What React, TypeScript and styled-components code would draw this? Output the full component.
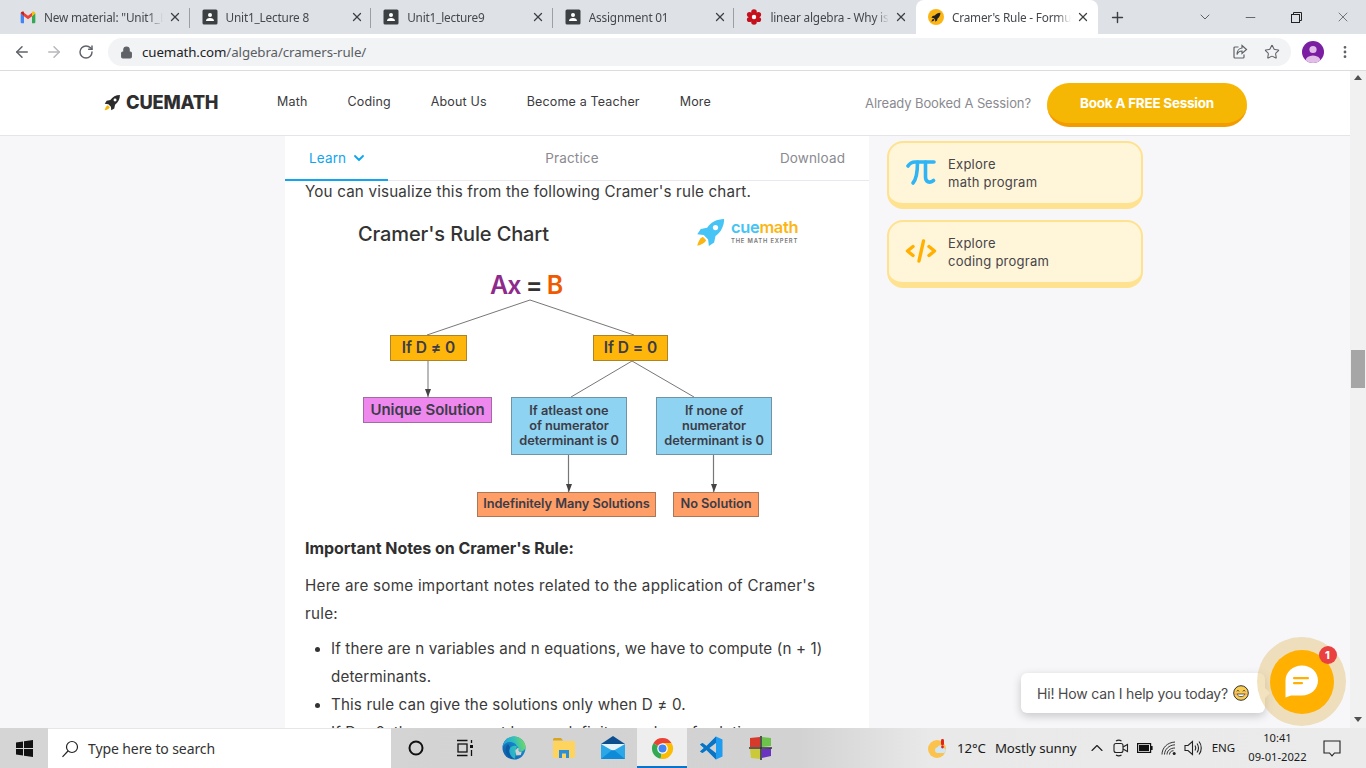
import React from "react";
import styled, { createGlobalStyle } from "styled-components";
import { ArrowLeft, ArrowRight, RotateCw, Star, MoreVertical, X, Plus, ChevronDown, Minus, Lock, ChevronUp } from "lucide-react";

const Global = createGlobalStyle`
  html, body { margin: 0; padding: 0; overflow: hidden; background: #fff; }
  * { box-sizing: border-box; }
`;

const body = `Inter, "Liberation Sans", sans-serif`;
const ui = `"Noto Sans", "Open Sans", sans-serif`;

const Shell = styled.div`
  position: relative; width: 1366px; height: 768px; display: flex; flex-direction: column; overflow: hidden;
  font-family: ${body}; color: #333;
`;

/* ---------- browser tabs ---------- */
const TabStrip = styled.div`
  height: 34px; flex: none; display: flex; background: #dee1e6; padding-left: 8px; font-family: ${ui};
`;
const Tab = styled.div<{ $active?: boolean; $sep?: boolean }>`
  position: relative; width: 181.6px; height: 34px; margin-top: 0; display: flex; align-items: center; padding-left: 12px; flex: none;
  background: ${(p) => (p.$active ? "#fff" : "transparent")};
  border-radius: ${(p) => (p.$active ? "8px 8px 0 0" : "0")};
  &::after {
    content: ""; position: absolute; right: 0; top: 8px; height: 20px; width: 1px;
    background: ${(p) => (p.$sep ? "#9aa0a6" : "transparent")};
  }
`;
const TabIcon = styled.span`
  width: 16px; height: 16px; flex: none; display: flex; margin-right: 8px;
`;
const TabTitle = styled.span`
  width: 119px; flex: none; overflow: hidden; white-space: nowrap; font-size: 11.8px; letter-spacing: -0.2px; color: #45494e;
  -webkit-mask-image: linear-gradient(to right, #000 88%, transparent 100%);
  mask-image: linear-gradient(to right, #000 88%, transparent 100%);
`;
const TabClose = styled.span`
  margin-left: 5px; display: flex; color: #3c4043;
`;
const StripButton = styled.span<{ $w: number; $left?: number }>`
  width: ${(p) => p.$w}px; height: 34px; flex: none; display: flex; align-items: center; justify-content: center; color: #3c4043;
  padding-left: ${(p) => p.$left ?? 0}px;
`;

/* ---------- toolbar ---------- */
const Toolbar = styled.div`
  height: 37px; flex: none; display: flex; align-items: flex-start; background: #fff; border-bottom: 1px solid #dadce0; padding: 4px 0 0 6px;
`;
const NavButton = styled.span<{ $off?: boolean }>`
  width: 32px; height: 28px; flex: none; display: flex; align-items: center; justify-content: center;
  color: ${(p) => (p.$off ? "#b6b8bb" : "#5f6368")};
`;
const MenuButton = styled(NavButton)`
  margin-left: 5px;
`;
const Omnibox = styled.div`
  width: 1183px; height: 28px; margin-left: 6px; flex: none; display: flex; align-items: center; background: #f1f3f4; border-radius: 14px; padding: 0 3px 0 12px;
  color: #5f6368;
`;
const Url = styled.span`
  margin-left: 9px; font-family: ${ui}; font-size: 13.3px; letter-spacing: -0.1px; color: #5a5e63; flex: 1;
  b { font-weight: 400; color: #202124; }
`;
const OmniIcon = styled.span`
  width: 32px; display: flex; justify-content: center; color: #5f6368;
`;
const Avatar = styled.span`
  margin-left: 11px; width: 22px; height: 22px; margin-top: 3px; flex: none; display: flex;
`;

/* ---------- viewport ---------- */
const Viewport = styled.div`
  flex: 1; min-height: 0; display: flex;
`;
const Page = styled.div`
  flex: 1; min-width: 0; display: flex; flex-direction: column; background: #f7f7fa;
`;
const Header = styled.header`
  height: 65px; flex: none; display: flex; align-items: center; background: #fff; border-bottom: 1px solid #e4e4ea; padding: 0 103px 0 104px;
`;
const Brand = styled.div`
  display: flex; align-items: center; gap: 5px; width: 115px; margin-bottom: 2px;
  font-weight: 800; font-size: 18.3px; letter-spacing: -0.2px; color: #2f2f2f;
`;
const Nav = styled.nav`
  display: flex; gap: 40px; margin-left: 58px; margin-bottom: 4px;
`;
const NavLink = styled.span`
  font-size: 12.5px; letter-spacing: 0.16px; color: #3b3b40;
`;
const HeaderRight = styled.div`
  margin-left: auto; display: flex; align-items: center; gap: 16px;
`;
const Already = styled.span`
  font-size: 13px; color: #8a8a90; letter-spacing: -0.1px;
`;
const BookButton = styled.span`
  width: 200px; height: 44px; margin-top: 4px; display: flex; align-items: center; justify-content: center;
  background: #f6b704; border-bottom: 4px solid #f39c00; border-radius: 22px;
  color: #fff; font-weight: 700; font-size: 13.5px; letter-spacing: -0.25px;
`;
const Content = styled.div`
  flex: 1; min-height: 0; display: flex; overflow: hidden;
`;
const Column = styled.main`
  width: 584px; margin-left: 285px; flex: none; background: #fff; overflow: hidden;
`;
const TabsRow = styled.div`
  height: 45px; display: grid; grid-template-columns: 103px 368px 113px; border-bottom: 1px solid #e8e8ee;
`;
const PageTab = styled.div<{ $active?: boolean; $align: string }>`
  display: flex; align-items: center; gap: 5px; justify-content: ${(p) => p.$align};
  padding: 0 0 ${(p) => (p.$active ? 0 : 2)}px ${(p) => (p.$active ? 24 : 0)}px;
  font-size: 13.5px; letter-spacing: 0.15px; color: ${(p) => (p.$active ? "#10a5ee" : "#8a8a90")};
  ${(p) => (p.$active ? "border-bottom: 2px solid #10a5ee; height: 45px;" : "")}
`;
const Article = styled.article`
  padding: 0 24px 0 20px;
`;
const Para = styled.p<{ $top?: number }>`
  margin: ${(p) => p.$top ?? 0}px 0 0; font-size: 15.2px; line-height: 28px; color: #3a3a3a; letter-spacing: 0.17px;
`;
const FirstPara = styled(Para)`
  line-height: 20px; margin-top: 0; padding-top: 1px;
`;
const NotesIntro = styled(Para)`
  letter-spacing: 0.25px;
`;
const Heading = styled.h4`
  margin: 4px 0 0; font-size: 16px; line-height: 28px; font-weight: 700; color: #2f2f2f; letter-spacing: -0.04px;
`;
const Bullets = styled.ul`
  margin: 7px 0 0; padding: 0 0 0 26px; list-style: none;
`;
const Bullet = styled.li`
  position: relative; font-size: 15.2px; line-height: 28px; color: #3a3a3a; white-space: nowrap; letter-spacing: 0.13px;
  &::before { content: ""; position: absolute; left: -16px; top: 12px; width: 5px; height: 5px; border-radius: 50%; background: #333; }
`;

/* ---------- chart ---------- */
const Chart = styled.div`
  position: relative; width: 584px; height: 325px; margin: 3px 0 0 -20px;
`;
const ChartLines = styled.svg`
  position: absolute; left: 0; top: 0;
`;
const ChartTitle = styled.div`
  position: absolute; left: 73px; top: 16px; font-size: 20px; font-weight: 500; line-height: 26px; color: #333; letter-spacing: -0.12px;
`;
const Equation = styled.div`
  position: absolute; left: 205px; top: 64px; font-size: 25px; line-height: 32px; font-weight: 600; white-space: nowrap; color: #333; letter-spacing: -1px;
`;
const Ax = styled.span` color: #8e2a8b; `;
const Bee = styled.span` color: #ef5a00; `;
const Node = styled.div<{ $x: number; $y: number; $w: number; $h: number; $bg: string; $size: number }>`
  position: absolute; left: ${(p) => p.$x}px; top: ${(p) => p.$y}px; width: ${(p) => p.$w}px; height: ${(p) => p.$h}px;
  display: flex; align-items: center; justify-content: center; text-align: center; white-space: nowrap; padding-bottom: 2px;
  background: ${(p) => p.$bg}; border: 1px solid rgba(70, 70, 70, 0.45);
  font-size: ${(p) => p.$size}px; font-weight: 600; line-height: 15px; color: #3c3c48; letter-spacing: -0.05px;
`;
const ChartLogo = styled.div`
  position: absolute; left: 411px; top: 12px; display: flex; gap: 5px; align-items: center;
`;
const ChartBrand = styled.div`
  display: flex; flex-direction: column; align-items: flex-start;
`;
const BrandName = styled.div`
  font-family: ${body}; font-size: 16.4px; line-height: 17px; font-weight: 600; letter-spacing: -0.3px; color: #45c4f5;
  span { color: #fcb614; }
`;
const BrandSub = styled.div`
  font-size: 5.8px; line-height: 8px; font-weight: 600; color: #777; letter-spacing: 0.85px; margin-top: 1px; white-space: nowrap;
`;

/* ---------- side cards ---------- */
const Side = styled.aside`
  width: 256px; margin-left: 18px; flex: none; padding-top: 5px; display: flex; flex-direction: column; gap: 11px;
`;
const Card = styled.div`
  height: 68px; display: flex; align-items: flex-start; padding: 12px 0 0 16px; gap: 11px;
  background: #fff5d8; border: 2px solid #ffe28f; border-bottom-width: 6px; border-radius: 16px;
`;
const CardIcon = styled.span`
  width: 32px; height: 32px; flex: none; display: flex; align-items: center; justify-content: center; margin: 1px 0 0 0;
`;
const CardText = styled.div`
  font-size: 13px; line-height: 18px; color: #45454a; letter-spacing: 0.25px;
`;

/* ---------- scrollbar ---------- */
const Scrollbar = styled.div`
  width: 16px; flex: none; background: #f1f1f1; display: flex; flex-direction: column; align-items: center; position: relative;
`;
const ScrollUp = styled.span`
  margin-top: 4px; width: 0; height: 0; border: 4px solid transparent; border-top: 0; border-bottom: 5px solid #505050;
`;
const Thumb = styled.span`
  margin-top: 270px; width: 14px; height: 38px; background: #a6a6a6;
`;
const ScrollDown = styled.span`
  margin-top: auto; margin-bottom: 6px; width: 0; height: 0; border: 4px solid transparent; border-bottom: 0; border-top: 5px solid #505050;
`;

/* ---------- chat ---------- */
const ChatHalo = styled.div`
  position: absolute; left: 1257px; top: 637px; width: 89px; height: 89px; border-radius: 50%; background: rgba(226, 190, 110, 0.45);
  display: flex; align-items: center; justify-content: center;
`;
const ChatButton = styled.div`
  width: 64px; height: 64px; border-radius: 50%; background: #ffb000; display: flex; align-items: center; justify-content: center; position: relative;
`;
const ChatBadge = styled.span`
  position: absolute; left: 49px; top: -4px; width: 18px; height: 18px; border-radius: 50%; background: #ea4040; color: #fff;
  font-size: 11px; font-weight: 800; display: flex; align-items: center; justify-content: center;
`;
const ChatBubble = styled.div`
  position: absolute; left: 1021px; top: 673px; width: 244px; height: 40px; background: #fff; border-radius: 6px;
  box-shadow: 0 3px 10px rgba(0, 0, 0, 0.2); display: flex; align-items: center; gap: 5px; padding-left: 16px;
  font-size: 14px; color: #4a4a4a; letter-spacing: -0.18px; white-space: nowrap;
  &::after { content: ""; position: absolute; right: -5px; top: 15px; width: 0; height: 0; border: 5px solid transparent; border-right: 0; border-left: 5px solid #fff; }
`;

/* ---------- taskbar ---------- */
const Taskbar = styled.footer`
  height: 40px; flex: none; display: flex; align-items: stretch; font-family: ${ui}; color: #1b1b1b;
  background: linear-gradient(to right, #d5d5d5 0, #d2d2d2 800px, #e9e9e9 930px, #ebebeb 100%);
`;
const StartCell = styled.span`
  width: 48px; flex: none; display: flex; align-items: center; justify-content: center;
`;
const SearchBox = styled.div`
  width: 343px; flex: none; background: #fff; display: flex; align-items: center; padding-left: 13px; gap: 9px; border-top: 1px solid #e6e6e6;
  font-size: 14px; color: #333; letter-spacing: -0.1px;
`;
const TaskCell = styled.span<{ $active?: boolean }>`
  width: 49.3px; flex: none; display: flex; align-items: center; justify-content: center; padding-top: ${(p) => (p.$active ? 2 : 0)}px;
  background: ${(p) => (p.$active ? "#eeeeee" : "transparent")};
  border-bottom: ${(p) => (p.$active ? "2px solid #0a74cc" : "0")};
`;
const Weather = styled.div`
  margin-left: 142.6px; display: flex; align-items: center; font-size: 13.3px; gap: 9px; white-space: nowrap; letter-spacing: -0.1px;
`;
const Tray = styled.div`
  display: flex; align-items: center; margin-left: 9px;
`;
const TrayCell = styled.span`
  width: 24px; height: 40px; flex: none; display: flex; align-items: center; justify-content: center; color: #222;
`;
const Lang = styled.span`
  width: 36px; text-align: center; font-size: 11.5px; flex: none; padding-bottom: 2px;
`;
const Clock = styled.div`
  width: 72px; flex: none; text-align: center; font-size: 11.2px; line-height: 19px; padding-bottom: 2px; align-self: center;
`;
const Notify = styled.span`
  width: 38px; flex: none; display: flex; align-items: center; justify-content: center;
`;

/* ---------- drawings ---------- */
const Rocket = ({ size, body: b, flame, win }: { size: number; body: string; flame: string; win: string }) => (
  <svg width={size} height={size} viewBox="0 0 24 24">
    <path d="M22.5 1.5c-5.8.1-10.5 2.6-13.6 7L3.8 9.6 1 13.8l5.2.6 3.5 3.5.6 5.2 4.2-2.8 1.1-5.1c4.4-3.1 6.8-7.9 6.9-13.7z" fill={b} />
    <circle cx="15.6" cy="8.4" r="2.1" fill={win} />
    <path d="M5.4 15.8C3 17 1.6 20 1 23c3-.6 6-2 7.2-4.4z" fill={flame} />
  </svg>
);
const Gmail = () => (
  <svg width="16" height="16" viewBox="0 0 24 24">
    <path d="M1 6.5V20a1.5 1.5 0 0 0 1.500 1.500H6V11z" fill="#4285f4" />
    <path d="M23 6.500V20a1.500 1.500 0 0 1-1.500 1.500H18V11z" fill="#34a853" />
    <path d="M6 11v-5.500L12 10l6-4.500V11l-6 4.500z" fill="#ea4335" />
    <path d="M1 6.500C1 4 4 2.800 5.800 4.200L6 5.500V11z" fill="#c5221f" />
    <path d="M23 6.500C23 4 20 2.800 18.200 4.200L18 5.500V11z" fill="#fbbc04" />
  </svg>
);
const Classroom = () => (
  <svg width="16" height="16" viewBox="0 0 16 16">
    <rect x="0.5" y="0.5" width="15" height="15" rx="1.500" fill="#3c4043" />
    <circle cx="8" cy="6" r="2" fill="#fff" />
    <path d="M4 12c0-2 1.500-3 4-3s4 1 4 3z" fill="#fff" />
  </svg>
);
const MathSE = () => (
  <svg width="16" height="16" viewBox="0 0 16 16">
    <g fill="#c4111b">
      <circle cx="8" cy="3" r="2.800" /><circle cx="8" cy="13" r="2.800" />
      <circle cx="3.500" cy="5.500" r="2.600" /><circle cx="12.500" cy="5.500" r="2.600" />
      <circle cx="3.500" cy="10.500" r="2.600" /><circle cx="12.500" cy="10.500" r="2.600" />
      <circle cx="8" cy="8" r="5" />
    </g>
    <circle cx="8" cy="8" r="2.200" fill="#fff" />
  </svg>
);
const CueFavicon = () => (
  <svg width="16" height="16" viewBox="0 0 16 16">
    <circle cx="8" cy="8" r="8" fill="#fbb615" />
    <g transform="translate(3 3) scale(0.42)">
      <path d="M22.500 1.500c-5.800.1-10.500 2.600-13.600 7L3.800 9.600 1 13.800l5.200.6 3.500 3.500.6 5.200 4.200-2.800 1.100-5.100c4.400-3.100 6.800-7.900 6.900-13.700z" fill="#222" />
      <path d="M5.400 15.800C3 17 1.600 20 1 23c3-.6 6-2 7.200-4.400z" fill="#222" />
    </g>
  </svg>
);
const ShareIcon = () => (
  <svg width="16" height="16" viewBox="0 0 16 16" fill="none" stroke="#5f6368" strokeWidth="1.200">
    <path d="M6.500 3H3a1 1 0 0 0-1 1v9a1 1 0 0 0 1 1h8a1 1 0 0 0 1-1v-2.500" />
    <path d="M10 1.500 14.500 5.500 10 9.500V7C7.500 7 6 8 5 10.500 5 7 7 4.200 10 4z" />
  </svg>
);
const Profile = () => (
  <svg width="22" height="22" viewBox="0 0 22 22">
    <defs><clipPath id="pc"><circle cx="11" cy="11" r="11" /></clipPath></defs>
    <g clipPath="url(#pc)">
      <rect width="22" height="22" fill="#7b1fa2" />
      <circle cx="11" cy="8.500" r="3.600" fill="#e1bee7" />
      <ellipse cx="11" cy="20" rx="7.500" ry="5.500" fill="#e1bee7" />
    </g>
  </svg>
);
const PiIcon = () => (
  <svg width="30" height="27" viewBox="0 0 30 27" fill="none" stroke="#2fb5f5" strokeWidth="3.600" strokeLinecap="round">
    <path d="M2 7C4 4 6 3 9 3h19" />
    <path d="M11.500 3C11.500 12 10.500 20 7 24" />
    <path d="M19.500 3v15c0 5 4 6.500 8 3.500" />
  </svg>
);
const CodeIcon = () => (
  <svg width="32" height="24" viewBox="0 0 32 24" fill="none" stroke="#ffb000" strokeWidth="3.400" strokeLinecap="round" strokeLinejoin="round">
    <path d="M8 7.500 2.500 12 8 16.500" />
    <path d="M24 7.500 29.500 12 24 16.500" />
    <path d="M18.500 2 14 22" />
  </svg>
);
const Smile = () => (
  <svg width="16" height="16" viewBox="0 0 16 16">
    <circle cx="8" cy="8" r="7.300" fill="#f9cb50" stroke="#333" strokeWidth="1" />
    <path d="M3.800 6.300c.5-1 1.800-1 2.300 0M9.900 6.300c.5-1 1.800-1 2.300 0" fill="none" stroke="#333" strokeWidth="1" />
    <path d="M4 9c1 3.500 7 3.500 8 0z" fill="#fff" stroke="#333" strokeWidth=".8" />
    <circle cx="3.300" cy="9" r="1.100" fill="#f29a70" /><circle cx="12.700" cy="9" r="1.100" fill="#f29a70" />
  </svg>
);
const ChatGlyph = () => (
  <svg width="33" height="33" viewBox="0 0 33 33">
    <path d="M17 0.500c9 0 16 6.500 16 15s-7 15-16 15H6L0.500 32.500V15.500C0.500 7 8 0.500 17 0.500z" fill="#fff" />
    <rect x="8" y="12" width="16" height="2.200" rx="1" fill="#ffb000" />
    <rect x="8" y="17" width="10" height="2.200" rx="1" fill="#ffb000" />
  </svg>
);
const WinLogo = () => (
  <svg width="17" height="17" viewBox="0 0 17 17" fill="#111">
    <path d="M0 2.400 7 1.400V8H0zM8 1.300 17 0V8H8zM0 9h7v6.600L0 14.600zM8 9h9v8l-9-1.300z" />
  </svg>
);
const SearchGlyph = () => (
  <svg width="18" height="18" viewBox="0 0 18 18" fill="none" stroke="#222" strokeWidth="1.200">
    <circle cx="11" cy="7" r="5.500" /><path d="M7 11 1.500 16.800" />
  </svg>
);
const TaskView = () => (
  <svg width="18" height="18" viewBox="0 0 18 18" fill="none" stroke="#111" strokeWidth="1.300">
    <path d="M1 1.500h10.500M1 16.500h10.500" /><rect x="2" y="5" width="9" height="8" />
    <rect x="14" y="6" width="3" height="3" fill="#111" stroke="none" /><path d="M15.500 1v3M15.500 11v6" />
  </svg>
);
const Edge = () => (
  <svg width="24" height="24" viewBox="0 0 24 24">
    <defs>
      <linearGradient id="e1" x1="0" y1="1" x2="1" y2="0"><stop offset="0" stopColor="#0c59a4" /><stop offset="1" stopColor="#1b9de2" /></linearGradient>
      <linearGradient id="e2" x1="0" y1="0.600" x2="1" y2="0.300"><stop offset="0" stopColor="#1b9de2" /><stop offset="0.600" stopColor="#35c1b5" /><stop offset="1" stopColor="#75da5f" /></linearGradient>
    </defs>
    <circle cx="12" cy="12" r="11.500" fill="url(#e1)" />
    <path d="M13 23C8 23 6 17 7.500 13c1.500-3 5-4 8-2.500 1 .6 1.200 1.500 1 2.500-.3 1.300 1 2.600 3 2.400 2.200-.3 4-2.300 4-4.400C23.500 5.500 18 .5 12 .5S1.500 5 .7 11c1-3 4-5 7-5 4 0 7 2.500 7 4" fill="url(#e2)" />
    <path d="M16 11.500c1.200 1 .5 2 .6 3 .2 1.200 2 1.400 3.200 1l-1 3.500-4.500.5-1-5z" fill="#d2d2d2" />
    <path d="M6 8C2.500 11 2.500 18 8 21.500c1.500.8 3.500 1.500 5 1.500C8 21 6 15 8 11.500z" fill="#0c59a4" />
  </svg>
);
const Folder = () => (
  <svg width="22" height="20" viewBox="0 0 22 20">
    <path d="M0 1.500C0 .7.700 0 1.500 0H8l2 2.500H0z" fill="#d9a520" />
    <path d="M0 3h22v15.500c0 .8-.7 1.500-1.500 1.500h-19C.7 20 0 19.300 0 18.500z" fill="#ffd45e" />
    <path d="M6 12h10v8h-3v-4.500H9V20H6z" fill="#2a8fd8" />
  </svg>
);
const Mail = () => (
  <svg width="24" height="24" viewBox="0 0 24 24">
    <path d="M12 0 24 8H0z" fill="#0b4f8f" />
    <rect x="0" y="8" width="24" height="15" fill="#2ba7e8" />
    <path d="M0 8h24L12 15z" fill="#e4f4fc" />
    <path d="M0 23 11 14l1 .6 1-.6 11 9z" fill="#0d8bd8" />
  </svg>
);
const Chrome = () => (
  <svg width="23" height="23" viewBox="0 0 24 24">
    <path d="M12 12 2.470 6.500A11 11 0 0 1 21.530 6.500H12z" fill="#ea4335" />
    <path d="M12 12 2.470 6.500A11 11 0 0 0 10 22.800z" fill="#34a853" />
    <path d="M12 6.500h9.530A11 11 0 0 1 10 22.800L12 12z" fill="#fbbc05" />
    <circle cx="12" cy="12" r="5.500" fill="#fff" /><circle cx="12" cy="12" r="4.200" fill="#4285f4" />
  </svg>
);
const VSCode = () => (
  <svg width="24" height="24" viewBox="0 0 24 24">
    <path d="M17 .5 23.500 3.500v17L17 23.500 7.500 14l-4 3L1 15.500 5 12 1 8.500 3.500 7l4 3z" fill="#1f9cf0" />
    <path d="M17 .5V7l-6.500 5 6.500 5v6.500L7.500 14l-4 3L1 15.500 5 12 1 8.500 3.500 7l4 3z" fill="#0a74c4" />
    <path d="M17 7v10l-6.500-5z" fill="#d2d2d2" />
  </svg>
);
const Blocks = () => (
  <svg width="23" height="24" viewBox="0 0 23 24">
    <path d="M1 2 11 1v10H1z" fill="#d63a2a" /><path d="M13 1l9 1v8l-9 1z" fill="#6cc24a" />
    <path d="M1 13h10v10l-9-1z" fill="#c9c93a" /><path d="M13 13l9-1v8l-9 2z" fill="#6a34c0" />
    <path d="M0 12h23M12 0v24" stroke="#333" strokeWidth="1.600" />
  </svg>
);
const WeatherIcon = () => (
  <svg width="20" height="22" viewBox="0 0 20 22">
    <circle cx="9" cy="12" r="9" fill="#fbc34e" />
    <path d="M9 16a3 3 0 0 1 .500-5.800 3.500 3.500 0 0 1 6.500 1A2.500 2.500 0 0 1 16 16z" fill="#cfe6f6" />
    <rect x="13" y="2" width="3" height="6.500" rx="1.400" fill="#e2231a" /><circle cx="14.500" cy="10" r="1.400" fill="#e2231a" />
  </svg>
);
const CamIcon = () => (
  <svg width="16" height="18" viewBox="0 0 16 18" fill="none" stroke="#222" strokeWidth="1.100">
    <rect x="1" y="4.500" width="9" height="9" rx="2" /><path d="M10 8l4.500-2.500v7L10 10" />
    <path d="M3 2c1.500-1 4-1 5.500 0M3 16c1.500 1 4 1 5.500 0" />
  </svg>
);
const BatteryIcon = () => (
  <svg width="16" height="10" viewBox="0 0 16 10">
    <rect x=".6" y=".6" width="13" height="8.800" fill="none" stroke="#111" strokeWidth="1.200" />
    <rect x="2" y="2" width="10" height="6" fill="#111" /><rect x="14" y="3" width="1.600" height="4" fill="#111" />
  </svg>
);
const WifiIcon = () => (
  <svg width="16" height="16" viewBox="0 0 16 16" fill="none" stroke="#333" strokeWidth="1">
    <path d="M1 14.500C1 8 6 2.500 14 2M3.500 14.500C3.500 9.500 8 5 14 4.800M6 14.500c0-3.500 3-6.500 8-6.500M8.500 14.500c0-2 1.500-3.800 4-3.800" />
    <circle cx="13.200" cy="13.500" r="1.500" fill="#222" stroke="none" />
  </svg>
);
const VolumeIcon = () => (
  <svg width="18" height="18" viewBox="0 0 18 18" fill="none" stroke="#222" strokeWidth="1.100">
    <path d="M1 6.500h3L8.500 2.500v13L4 11.500H1z" />
    <path d="M11 6.500c1 1.500 1 3.500 0 5M13 4.500c2 2.500 2 6.500 0 9M15 2.500c3 3.500 3 9.500 0 13" />
  </svg>
);
const NotifyIcon = () => (
  <svg width="18" height="17" viewBox="0 0 18 17" fill="none" stroke="#222" strokeWidth="1.100">
    <path d="M1 1h16v12h-5.500L9 15.800 6.500 13H1z" />
  </svg>
);

const tabs = [
  { icon: <Gmail />, title: 'New material: "Unit1_Lecture', sep: true },
  { icon: <Classroom />, title: "Unit1_Lecture 8", sep: true },
  { icon: <Classroom />, title: "Unit1_lecture9", sep: true },
  { icon: <Classroom />, title: "Assignment 01", sep: true },
  { icon: <MathSE />, title: "linear algebra - Why is", sep: false },
  { icon: <CueFavicon />, title: "Cramer's Rule - Formula", sep: false, active: true },
];

export default function App() {
  return (
    <Shell>
      <Global />
      <TabStrip>
        {tabs.map((t) => (
          <Tab key={t.title} $active={t.active} $sep={t.sep}>
            <TabIcon>{t.icon}</TabIcon>
            <TabTitle>{t.title}</TabTitle>
            <TabClose><X size={14} strokeWidth={2.2} /></TabClose>
          </Tab>
        ))}
        <StripButton $w={40}><Plus size={17} strokeWidth={2} /></StripButton>
        <StripButton $w={90} $left={44}><ChevronDown size={16} strokeWidth={1.2} /></StripButton>
        <StripButton $w={46}><Minus size={15} strokeWidth={1.2} /></StripButton>
        <StripButton $w={46}>
          <svg width="11" height="11" viewBox="0 0 11 11" fill="none" stroke="#222" strokeWidth="1"><rect x=".5" y="2.500" width="8" height="8" /><path d="M2.500 2.500v-2h8v8h-2" /></svg>
        </StripButton>
        <StripButton $w={46}><X size={16} strokeWidth={1} /></StripButton>
      </TabStrip>

      <Toolbar>
        <NavButton><ArrowLeft size={18} strokeWidth={2} /></NavButton>
        <NavButton $off><ArrowRight size={18} strokeWidth={2} /></NavButton>
        <NavButton><RotateCw size={16} strokeWidth={2.2} /></NavButton>
        <Omnibox>
          <Lock size={13} fill="#5f6368" strokeWidth={2} />
          <Url><b>cuemath.com</b>/algebra/cramers-rule/</Url>
          <OmniIcon><ShareIcon /></OmniIcon>
          <OmniIcon><Star size={16} strokeWidth={1.6} /></OmniIcon>
        </Omnibox>
        <Avatar><Profile /></Avatar>
        <MenuButton><MoreVertical size={16} strokeWidth={2.2} /></MenuButton>
      </Toolbar>

      <Viewport>
        <Page>
          <Header>
            <Brand><Rocket size={17} body="#2b2b2b" flame="#f6b704" win="#fff" />CUEMATH</Brand>
            <Nav>
              <NavLink>Math</NavLink>
              <NavLink>Coding</NavLink>
              <NavLink>About Us</NavLink>
              <NavLink>Become a Teacher</NavLink>
              <NavLink>More</NavLink>
            </Nav>
            <HeaderRight>
              <Already>Already Booked A Session?</Already>
              <BookButton>Book A FREE Session</BookButton>
            </HeaderRight>
          </Header>
          <Content>
            <Column>
              <TabsRow>
                <PageTab $active $align="flex-start">Learn <ChevronDown size={16} strokeWidth={2.8} /></PageTab>
                <PageTab $align="center">Practice</PageTab>
                <PageTab $align="center">Download</PageTab>
              </TabsRow>
              <Article>
                <FirstPara>You can visualize this from the following Cramer's rule chart.</FirstPara>
                <Chart>
                  <ChartLines width="584" height="325" viewBox="0 0 584 325" fill="none" stroke="#777" strokeWidth="1">
                    <path d="M142 130 245 95 349 130" />
                    <path d="M143 156V192" />
                    <path d="M286 192 347 156 409 192" />
                    <path d="M283.500 250V287M428.500 250V287" strokeWidth="1.200" />
                    <path d="M140 184h6l-3 8zM281 279h6l-3 8zM426 279h6l-3 8z" fill="#444" stroke="none" />
                  </ChartLines>
                  <ChartTitle>Cramer's Rule Chart</ChartTitle>
                  <ChartLogo>
                    <Rocket size={30} body="#45c4f5" flame="#fcb614" win="#fff" />
                    <ChartBrand>
                      <BrandName>cue<span>math</span></BrandName>
                      <BrandSub>THE MATH EXPERT</BrandSub>
                    </ChartBrand>
                  </ChartLogo>
                  <Equation><Ax>Ax</Ax> = <Bee>B</Bee></Equation>
                  <Node $x={105} $y={130} $w={77} $h={26} $bg="#ffb60a" $size={15.500}>If D ≠ 0</Node>
                  <Node $x={308} $y={130} $w={75} $h={26} $bg="#ffb60a" $size={15.500}>If D = 0</Node>
                  <Node $x={78} $y={192} $w={129} $h={26} $bg="#ee88ee" $size={15}>Unique Solution</Node>
                  <Node $x={226} $y={192} $w={116} $h={58} $bg="#8ed4f2" $size={12.800}>If atleast one<br />of numerator<br />determinant is 0</Node>
                  <Node $x={371} $y={192} $w={116} $h={58} $bg="#8ed4f2" $size={12.800}>If none of<br />numerator<br />determinant is 0</Node>
                  <Node $x={192} $y={287} $w={179} $h={25} $bg="#ff9e66" $size={12.800}>Indefinitely Many Solutions</Node>
                  <Node $x={388} $y={287} $w={86} $h={25} $bg="#ff9e66" $size={12.800}>No Solution</Node>
                </Chart>
                <Heading>Important Notes on Cramer's Rule:</Heading>
                <NotesIntro $top={10}>Here are some important notes related to the application of Cramer's<br />rule:</NotesIntro>
                <Bullets>
                  <Bullet>If there are n variables and n equations, we have to compute (n + 1)<br />determinants.</Bullet>
                  <Bullet>This rule can give the solutions only when D ≠ 0.</Bullet>
                  <Bullet>If D = 0, then we cannot have a definite number of solutions.</Bullet>
                </Bullets>
              </Article>
            </Column>
            <Side>
              <Card>
                <CardIcon><PiIcon /></CardIcon>
                <CardText>Explore<br />math program</CardText>
              </Card>
              <Card>
                <CardIcon><CodeIcon /></CardIcon>
                <CardText>Explore<br />coding program</CardText>
              </Card>
            </Side>
          </Content>
        </Page>
        <Scrollbar>
          <ScrollUp />
          <Thumb />
          <ScrollDown />
        </Scrollbar>
      </Viewport>

      <Taskbar>
        <StartCell><WinLogo /></StartCell>
        <SearchBox><SearchGlyph />Type here to search</SearchBox>
        <TaskCell>
          <svg width="16" height="16" viewBox="0 0 16 16" fill="none" stroke="#111" strokeWidth="2"><circle cx="8" cy="8" r="6.500" /></svg>
        </TaskCell>
        <TaskCell><TaskView /></TaskCell>
        <TaskCell><Edge /></TaskCell>
        <TaskCell><Folder /></TaskCell>
        <TaskCell><Mail /></TaskCell>
        <TaskCell $active><Chrome /></TaskCell>
        <TaskCell><VSCode /></TaskCell>
        <TaskCell><Blocks /></TaskCell>
        <Weather><WeatherIcon /><span>12°C</span><span>Mostly sunny</span></Weather>
        <Tray>
          <TrayCell><ChevronUp size={20} strokeWidth={1.4} /></TrayCell>
          <TrayCell><CamIcon /></TrayCell>
          <TrayCell><BatteryIcon /></TrayCell>
          <TrayCell><WifiIcon /></TrayCell>
          <TrayCell><VolumeIcon /></TrayCell>
          <Lang>ENG</Lang>
          <Clock>10:41<br />09-01-2022</Clock>
          <Notify><NotifyIcon /></Notify>
        </Tray>
      </Taskbar>

      <ChatBubble>Hi! How can I help you today? <Smile /></ChatBubble>
      <ChatHalo>
        <ChatButton>
          <ChatGlyph />
          <ChatBadge>1</ChatBadge>
        </ChatButton>
      </ChatHalo>
    </Shell>
  );
}
